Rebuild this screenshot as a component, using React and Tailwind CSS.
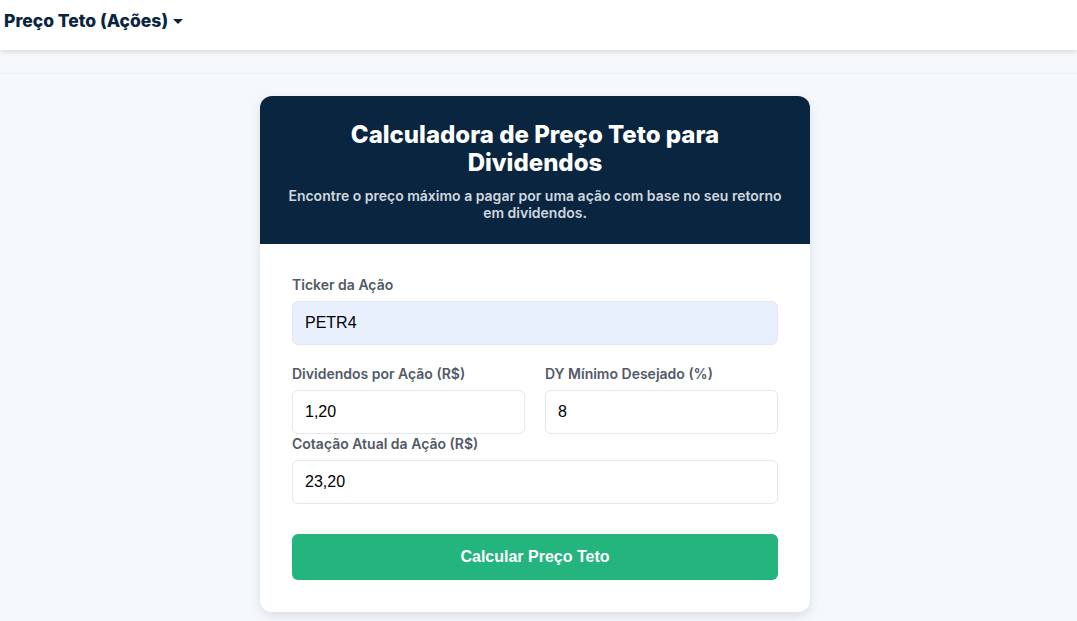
import React from "react";

function Label({ children }) {
  return (
    <label className="block text-[14px] leading-[20px] font-semibold text-[#525a66] mb-[6px]">
      {children}
    </label>
  );
}

function Field({ value, bg = "bg-white" }) {
  return (
    <div
      className={`h-[44px] w-full rounded-[6px] border border-[#e3e8ee] ${bg} px-[12px] flex items-center text-[16px] text-black`}
      style={{ fontFamily: '"Liberation Sans", Arial, sans-serif' }}
    >
      {value}
    </div>
  );
}

export default function App() {
  return (
    <div
      className="min-h-[621px] bg-[#f6f9fc]"
      style={{ fontFamily: 'Inter, "Noto Sans", sans-serif' }}
    >
      <nav className="h-[50px] bg-white shadow-[0_2px_5px_rgba(0,0,0,0.12)] flex items-start pt-[10px] px-[4px] relative z-10">
        <div className="flex items-center gap-[5px] text-[17.5px] leading-[22px] font-extrabold text-[#0a2540]">
          <span>Preço Teto (Ações)</span>
          <svg width="10" height="6" viewBox="0 0 10 6" className="mt-[1px]">
            <path d="M0 0 L10 0 L5 5 Z" fill="#0a2540" />
          </svg>
        </div>
      </nav>
      <div className="h-[24px] border-b border-[#edf1f5]" />
      <div className="flex justify-center pt-[22px] pr-[7px]">
        <div className="w-[550px] rounded-[12px] bg-white shadow-[0_4px_12px_rgba(15,30,60,0.12)] overflow-hidden">
          <div className="bg-[#0a2540] px-[24px] pt-[25px] pb-[23px] text-center">
            <h1 className="text-[24px] leading-[28px] font-extrabold text-white max-w-[400px] mx-auto">
              Calculadora de Preço Teto para Dividendos
            </h1>
            <p className="mt-[10px] text-[14px] leading-[17px] font-semibold text-[#cfd7df]">
              Encontre o preço máximo a pagar por uma ação com base no seu retorno em dividendos.
            </p>
          </div>
          <div className="px-[32px] pt-[31px] pb-[32px]">
            <div>
              <Label>Ticker da Ação</Label>
              <Field value="PETR4" bg="bg-[#e8f0fe]" />
            </div>
            <div className="grid grid-cols-2 gap-[20px] mt-[19px]">
              <div>
                <Label>Dividendos por Ação (R$)</Label>
                <Field value="1,20" />
              </div>
              <div>
                <Label>DY Mínimo Desejado (%)</Label>
                <Field value="8" />
              </div>
            </div>
            <div className="mt-0">
              <Label>Cotação Atual da Ação (R$)</Label>
              <Field value="23,20" />
            </div>
            <button
              className="mt-[30px] h-[46px] w-full rounded-[6px] bg-[#24b47e] text-white text-[16px] font-bold"
              style={{ fontFamily: '"Liberation Sans", Arial, sans-serif' }}
            >
              Calcular Preço Teto
            </button>
          </div>
        </div>
      </div>
    </div>
  );
}
